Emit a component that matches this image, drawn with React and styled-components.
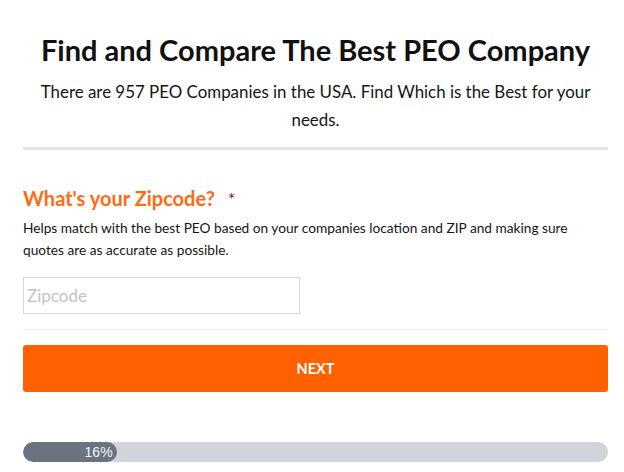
import React from 'react'
import styled, { createGlobalStyle } from 'styled-components'

const GlobalStyle = createGlobalStyle`
  body {
    margin: 0;
    background: #fff;
    font-family: Lato, "Open Sans", sans-serif;
  }
`

const Page = styled.div`
  width: 585px;
  padding: 30px 0 0 23px;
`

const Header = styled.div`
  text-align: center;
  padding-bottom: 13px;
  border-bottom: 3px solid #e5e5e5;
`

const Title = styled.h1`
  margin: 0;
  font-size: 29px;
  font-weight: 700;
  line-height: 40px;
  color: #111;
`

const Subtitle = styled.p`
  margin: 8px -2px 0;
  font-size: 16.9px;
  line-height: 28px;
  color: #151515;
`

const Field = styled.div`
  padding: 33px 0 15px;
  border-bottom: 1px solid #eee;
`

const Label = styled.h2`
  margin: 0;
  font-size: 20px;
  font-weight: 700;
  line-height: 30px;
  color: #ff6a13;
`

const Star = styled.span`
  color: #7a1f1f;
  font-size: 18px;
  font-weight: 400;
  margin-left: 13px;
`

const Help = styled.p`
  margin: 3px 0 0;
  font-size: 13.7px;
  line-height: 22px;
  color: #151515;
`

const Input = styled.input`
  display: block;
  margin-top: 16px;
  width: 277px;
  height: 37px;
  box-sizing: border-box;
  padding: 0 3px;
  border: 1px solid #d9d9d9;
  font-family: Lato, sans-serif;
  font-size: 17px;
  outline: none;
  &::placeholder {
    color: #c4c4c4;
  }
`

const Button = styled.button`
  display: block;
  width: 100%;
  height: 47px;
  margin-top: 15px;
  border: none;
  border-radius: 3px;
  background: #ff6100;
  color: #fff;
  font-family: Lato, sans-serif;
  font-weight: 700;
  font-size: 14.5px;
  cursor: pointer;
`

const Track = styled.div`
  margin-top: 50px;
  height: 20px;
  border-radius: 10px;
  background: #d1d5db;
  overflow: hidden;
`

const Fill = styled.div`
  height: 100%;
  border-radius: 10px;
  background: #6b7280;
  color: #f3f4f6;
  font-family: "Liberation Sans", Arial, sans-serif;
  font-size: 14px;
  line-height: 20px;
  text-align: right;
  padding-right: 4px;
  box-sizing: border-box;
`

const App = () => {
  const progress = 16
  return (
    <>
      <GlobalStyle />
      <Page>
        <Header>
          <Title>Find and Compare The Best PEO Company</Title>
          <Subtitle>There are 957 PEO Companies in the USA. Find Which is the Best for your needs.</Subtitle>
        </Header>
        <Field>
          <Label>What's your Zipcode?<Star>*</Star></Label>
          <Help>Helps match with the best PEO based on your companies location and ZIP and making sure quotes are as accurate as possible.</Help>
          <Input placeholder="Zipcode" />
        </Field>
        <Button>NEXT</Button>
        <Track>
          <Fill style={{ width: `${progress}%` }}>{progress}%</Fill>
        </Track>
      </Page>
    </>
  )
}

export default App
